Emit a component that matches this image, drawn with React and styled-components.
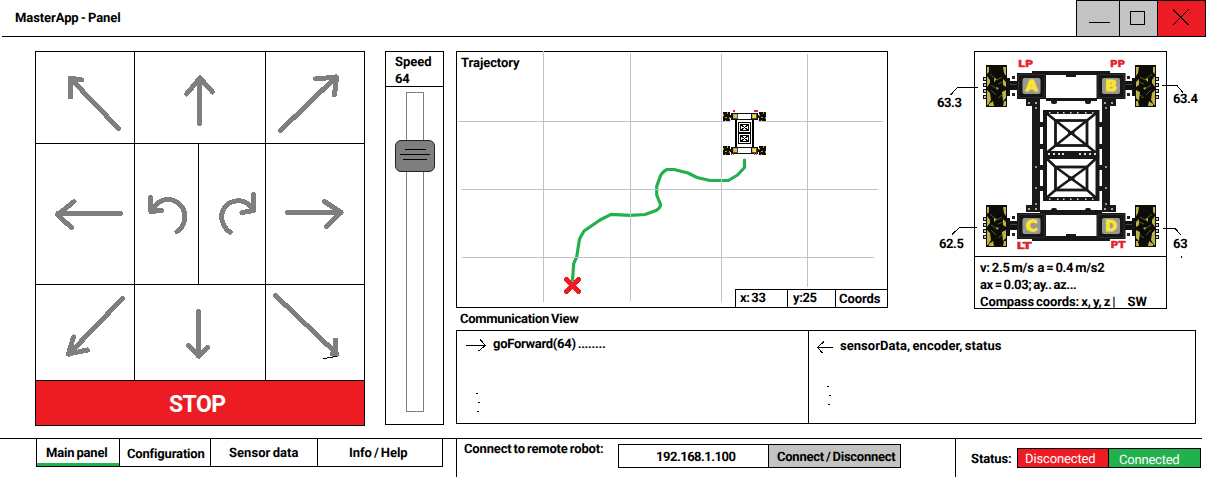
import React, { useLayoutEffect, useRef, useState } from "react";
import styled, { createGlobalStyle } from "styled-components";

const GlobalStyle = createGlobalStyle`
  * { box-sizing: border-box; }
  body {
    margin: 0;
    background: #fff;
    color: #000;
    font: 700 13px/16px Roboto, "Liberation Sans", sans-serif;
    text-rendering: geometricPrecision;
    overflow: hidden;
  }
`;

/* ---------- text ---------- */

const Label = styled.span`
  display: block;
  flex: none;
  width: max-content;
  white-space: pre;
  word-spacing: ${(p) => p.$word ?? -1}px;
  font-weight: ${(p) => (p.$light ? 400 : 700)};
  font-size: ${(p) => p.$size || 13}px;
  color: ${(p) => p.$color || "#000"};
`;

// Tracks its letters out or in so that the label takes the given width.
function Text({ w, children, ...rest }) {
  const ref = useRef(null);
  const [spacing, setSpacing] = useState(0);
  useLayoutEffect(() => {
    ref.current.style.letterSpacing = "0px";
    const natural = ref.current.getBoundingClientRect().width;
    const next = (w + 0.5 - natural) / children.length;
    ref.current.style.letterSpacing = `${next}px`;
    setSpacing(next);
  }, [w, children]);
  return (
    <Label ref={ref} style={{ letterSpacing: spacing }} {...rest}>
      {children}
    </Label>
  );
}

/* ---------- window frame ---------- */

const Window = styled.div`
  width: 1206px;
  height: 477px;
  display: flex;
  flex-direction: column;
  background: #fff;
`;

const TitleBar = styled.header`
  height: 37px;
  margin-left: 2px;
  padding-left: 13px;
  display: flex;
  justify-content: space-between;
  border-bottom: 1px solid #000;
`;

const TitleText = styled.div`
  padding-top: 11px;
`;

const WindowButtons = styled.div`
  display: grid;
  grid-template-columns: 42px 37px 47px;
  gap: 1px;
  padding: 1px 1px 0;
  background: #000;
`;

const WindowButton = styled.button`
  border: 0;
  padding: 0;
  background: ${(p) => (p.$danger ? "#ed1c24" : "#c3c3c3")};
`;

const Drawing = styled.svg`
  display: block;
  width: 100%;
  height: 100%;
  fill: none;
  stroke: #000;
  stroke-width: 1;
`;

const Main = styled.main`
  display: flex;
  align-items: flex-start;
  height: 401px;
  padding: 14px 0 0 35px;
`;

/* ---------- drive pad ---------- */

const Pad = styled.section`
  display: grid;
  flex: none;
  grid-template-columns: 98px 130px 98px;
  grid-template-rows: 91px 140px 95px 44px;
  gap: 1px;
  padding: 1px;
  background: #000;
`;

const PadButton = styled.button`
  border: 0;
  padding: 0;
  background: #fff;
`;

const TurnPair = styled.div`
  display: grid;
  grid-template-columns: 63px 66px;
  gap: 1px;
`;

const StopButton = styled.button`
  grid-column: 1 / -1;
  display: flex;
  align-items: center;
  border: 0;
  padding: 3px 0 0 133px;
  background: #ed1c24;
  font: inherit;
`;

const ArrowDrawing = styled(Drawing)`
  stroke: #7f7f7f;
  stroke-width: 5;
  stroke-linecap: round;
  stroke-linejoin: round;
`;

function Arrow({ box, d, children }) {
  return (
    <PadButton>
      <ArrowDrawing viewBox={box} shapeRendering="crispEdges">
        <path d={d} />
        {children}
      </ArrowDrawing>
    </PadButton>
  );
}

/* ---------- speed ---------- */

const SpeedPanel = styled.section`
  flex: none;
  width: 59px;
  height: 374px;
  margin-left: 20px;
  border: 1px solid #000;
`;

const SpeedHead = styled.div`
  height: 35px;
  padding: 2px 0 0 9px;
  border-bottom: 1px solid #000;
  line-height: 17px;
`;

const Track = styled.div`
  width: 18px;
  height: 320px;
  margin: 5px 0 0 20px;
  padding-top: 47px;
  border: 1px solid #7f7f7f;
`;

const Thumb = styled.div`
  display: flex;
  flex-direction: column;
  align-items: center;
  gap: 4px;
  width: 40px;
  height: 32px;
  margin-left: -12px;
  padding-top: 8px;
  border: 1px solid #222;
  border-radius: 6px;
  background: #7f7f7f;
`;

const Grip = styled.i`
  width: ${(p) => p.$w}px;
  height: 1px;
  background: #000;
`;

/* ---------- right side ---------- */

const Views = styled.div`
  margin-left: 12px;
  width: 750px;
`;

const TopViews = styled.div`
  display: flex;
  height: 258px;
`;

const Trajectory = styled.section`
  position: relative;
  flex: none;
  width: 432px;
  height: 257px;
  border: 1px solid #000;
`;

const TrajectoryHead = styled.div`
  padding: 4px 0 0 4px;
`;

const MapLayer = styled(Drawing)`
  position: absolute;
  inset: -1px;
  width: 432px;
  height: 257px;
`;

const CoordBar = styled.div`
  position: absolute;
  right: -1px;
  bottom: -1px;
  display: grid;
  grid-template-columns: 51px 47px 51px;
  gap: 1px;
  padding: 1px;
  height: 19px;
  background: #000;
`;

const CoordCell = styled.div`
  padding: ${(p) => p.$top || 1}px 0 0 ${(p) => p.$left}px;
  line-height: 16px;
  height: 17px;
  background: #fff;
`;

const RobotArea = styled.section`
  position: relative;
  display: flex;
  margin-left: 46px;
`;

const Readings = styled.div`
  width: ${(p) => p.$w}px;
  padding: ${(p) => p.$top}px 0 0 ${(p) => p.$left}px;
  display: flex;
  flex-direction: column;
  gap: ${(p) => p.$gap}px;
`;

const Indented = styled.div`
  padding-left: 2px;
`;

const RobotPanel = styled.div`
  width: 193px;
  height: 258px;
  border: 1px solid #000;
  overflow: hidden;
`;

const RobotPicture = styled.div`
  height: 205px;
  border-bottom: 1px solid #000;
`;

const Telemetry = styled.div`
  padding: 3px 0 0 5px;
  line-height: 17px;
`;

const TelemetryRow = styled.div`
  display: flex;
  gap: 12px;
`;

const LeaderLines = styled(Drawing)`
  position: absolute;
  left: 0;
  top: 0;
  width: 272px;
  height: 258px;
`;

const CommTitle = styled.div`
  height: 21px;
  padding: 3px 0 0 4px;
`;

const CommBox = styled.section`
  display: grid;
  grid-template-columns: 351px 386px;
  grid-template-rows: 92px;
  gap: 1px;
  width: 740px;
  height: 94px;
  padding: 1px;
  background: #000;
`;

const CommPane = styled.div`
  display: grid;
  grid-template-columns: ${(p) => p.$first}px 1fr;
  align-items: start;
  padding-top: ${(p) => p.$top}px;
  background: #fff;
`;

const CommGlyphs = styled(Drawing)`
  height: 80px;
`;

/* ---------- footer ---------- */

const Footer = styled.footer`
  display: flex;
  flex: none;
  width: 1202px;
  height: 39px;
  border-top: 1px solid #000;
`;

const Tabs = styled.nav`
  display: grid;
  grid-template-columns: 82px 90px 106px 124px;
  gap: 1px;
  width: 407px;
  height: 28px;
  margin-left: 36px;
  padding: 0 1px 1px;
  background: #000;
`;

const Tab = styled.div`
  padding: ${(p) => p.$top || 7}px 0 0 ${(p) => p.$left}px;
  background: #fff;
  box-shadow: ${(p) => (p.$active ? "inset 0 -3px #22b14c" : "none")};
`;

const Connection = styled.div`
  display: flex;
  align-items: flex-start;
  width: 499px;
  margin-left: 13px;
  padding: 2px 0 0 7px;
  border-left: 1px solid #000;
`;

const AddressGroup = styled.div`
  display: grid;
  grid-template-columns: 149px 131px;
  gap: 1px;
  width: 283px;
  height: 24px;
  margin: 3px 0 0 14px;
  padding: 1px;
  background: #000;
`;

const AddressCell = styled.div`
  padding: 5px 0 0 ${(p) => p.$left}px;
  background: ${(p) => (p.$button ? "#c3c3c3" : "#fff")};
`;

const ConnectionLabel = styled.div`
  width: 140px;
  padding-top: 1px;
`;

const Status = styled.div`
  display: flex;
  align-items: flex-start;
  padding: 9px 0 0 15px;
  border-left: 1px solid #000;
`;

const StatusLabel = styled.div`
  width: 46px;
  padding-top: 4px;
`;

const StatusBar = styled.div`
  display: grid;
  grid-template-columns: 90px 91px;
  gap: 1px;
  height: 20px;
  padding: 1px;
  background: #000;
`;

const StatusCell = styled.div`
  height: 18px;
  padding: ${(p) => p.$top}px 0 0 ${(p) => p.$left}px;
  background: ${(p) => (p.$on ? "#22b14c" : "#ed1c24")};
`;

/* ---------- robot drawing ---------- */

const Letter = styled.text`
  font: 700 ${(p) => p.$size}px "DejaVu Sans", sans-serif;
  fill: ${(p) => p.$fill};
  stroke: ${(p) => p.$fill};
  stroke-width: ${(p) => p.$edge || 0};
`;

function Wheel({ x, y, flip }) {
  return (
    <g transform={`translate(${x} ${y})${flip ? " translate(21 0) scale(-1 1)" : ""}`} stroke="none">
      {[13, 19, 25, 31].map((b) => (
        <g key={b}>
          <rect x="-3" y={b - 1} width="4" height="4" fill="#111" />
          <rect x="-2" y={b} width="2" height="2" fill="#c3c3c3" />
        </g>
      ))}
      <rect x="20" y="13" width="4" height="18" fill="#111" />
      <rect x="23" y="16" width="9" height="9" fill="#111" />
      <rect x="24" y="19" width="7" height="1" fill="#444" />
      <rect x="26" y="11" width="3" height="3" fill="#222" />
      <rect x="26" y="28" width="3" height="3" fill="#222" />
      <rect width="21" height="42" fill="#0c0c08" />
      <path
        d="M1 2h2v5l-2 2zM1 11l3 4v3l-3 4zM1 25l3 3 1 7-3 5h-1zM17 2h3v9l-2-3zM17 14l3 3v5l-3-2zM16 27l4-2v8l-3 3zM18 36h2v5h-3zM8 13l3 1-3 3zM10 22l3 1-2 2zM3 39l4-3 1 5h-5z"
        fill="#bdb445"
      />
      <path d="M4 9l7 6M11 15l5-3M5 20l6 4M5 25l5 5M12 19l5-2M12 33l4-3" stroke="#6f6b2c" strokeWidth=".8" />
    </g>
  );
}

function Motor({ x, y, h, letter }) {
  return (
    <g>
      <rect x={x} y={y} width="29" height={h} fill="#161616" stroke="none" />
      <rect x={x + 1.5} y={y + 1.5} width="26" height={h - 3} stroke="#2c2c2c" />
      <rect x={x + 5.5} y={y + 5} width="18" height="16" rx="2" fill="#999992" stroke="none" />
      <Letter
        x={x + 14.5}
        y={y + 18.2}
        textAnchor="middle"
        textLength="12"
        lengthAdjust="spacingAndGlyphs"
        $size={15}
        $fill="#f9e532"
        $edge={1}
      >
        {letter}
      </Letter>
    </g>
  );
}

function Bracket({ x, y }) {
  return (
    <g stroke="none">
      <rect x={x} y={y} width="14" height="7" fill="#1a1a1a" />
      <rect x={x + 2} y={y + 3} width="2" height="2" fill="#aaa" />
      <rect x={x + 9} y={y + 3} width="2" height="2" fill="#aaa" />
    </g>
  );
}

function Truss({ y, h, top, bottom }) {
  return (
    <g stroke="#181818">
      <rect x="1045" y={y} width="52.5" height={h} strokeWidth="4" />
      <rect x="1055.5" y={top} width="31.5" height={bottom - top} strokeWidth="2.8" />
      <path
        d={`M1055.500 ${top}L1087 ${bottom}M1087 ${top}L1055.500 ${bottom}M1045 ${y}L1055.500 ${top}M1097.500 ${y}L1087 ${top}M1045 ${y + h}L1055.500 ${bottom}M1097.500 ${y + h}L1087 ${bottom}`}
        strokeWidth="2.6"
      />
      <rect x="1068" y={(top + bottom) / 2 - 2} width="6.5" height="4" fill="#181818" stroke="none" />
    </g>
  );
}

function Robot() {
  return (
    <Drawing viewBox="975 52 191 204">
      <Wheel x={986} y={65} />
      <Wheel x={1135} y={65} flip />
      <Wheel x={986} y={205} />
      <Wheel x={1135} y={205} flip />

      <g fill="#181818" stroke="none">
        <rect x="1032" y="100" width="8" height="109" />
        <rect x="1102" y="100" width="8" height="109" />
        <rect x="1032" y="71" width="78" height="4" />
        <rect x="1046" y="98" width="51" height="3" />
        <rect x="1051" y="99" width="6" height="5" rx="2" />
        <rect x="1085" y="99" width="6" height="5" rx="2" />
        <rect x="1066" y="74" width="10" height="3" />
        <rect x="1040" y="210" width="62" height="5" />
        <rect x="1051" y="208" width="6" height="4" rx="2" />
        <rect x="1085" y="208" width="6" height="4" rx="2" />
        <rect x="1032" y="236" width="78" height="5" />
        <rect x="1066" y="234" width="10" height="4" />
        {[122, 144, 165, 186].map((y) => (
          <g key={y}>
            <rect x="1039" y={y} width="6" height="5" />
            <rect x="1098" y={y} width="6" height="5" />
          </g>
        ))}
      </g>

      <Truss y={112} h={42} top={120.5} bottom={145.5} />
      <Truss y={157} h={42} top={167} bottom={190} />
      <g stroke="none">
        <rect x="1044" y="151" width="55" height="8" fill="#181818" />
        <g fill="#ddd">
          {[1048, 1053, 1058, 1062, 1079, 1084, 1089, 1094].map((x) => (
            <rect key={x} x={x} y="153" width="2" height="2" />
          ))}
          {[1049, 1057, 1063, 1070, 1077, 1085, 1092].map((x) => (
            <g key={x}>
              <rect x={x} y="112" width="1.5" height="1.5" />
              <rect x={x} y="198.5" width="1.5" height="1.5" />
            </g>
          ))}
        </g>
        <g fill="#999">
          {[107, 166, 187, 203].map((y) => (
            <g key={y}>
              <rect x="1035" y={y} width="2" height="2" />
              <rect x="1105" y={y} width="2" height="2" />
            </g>
          ))}
        </g>
      </g>

      <Bracket x={1026} y={99} />
      <Bracket x={1102} y={99} />
      <Bracket x={1026} y={205} />
      <Bracket x={1102} y={205} />
      <Motor x={1017} y={73} h={26} letter="A" />
      <Motor x={1096.5} y={73} h={26} letter="B" />
      <Motor x={1017} y={213} h={26} letter="C" />
      <Motor x={1096.5} y={213} h={26} letter="D" />

      {[
        ["LP", 1018, 67.3],
        ["PP", 1110, 67.3],
        ["LT", 1016.5, 248.8],
        ["PT", 1110.5, 248.3],
      ].map(([t, x, y]) => (
        <Letter key={t} x={x} y={y} textLength="15" lengthAdjust="spacingAndGlyphs" $size={9.5} $fill="#e3242b" $edge={0.5}>
          {t}
        </Letter>
      ))}
    </Drawing>
  );
}

function MiniWheel({ x, y }) {
  return (
    <g stroke="none">
      <rect x={x} y={y} width="7" height="9" fill="#0c0c08" />
      <path d={`M${x} ${y + 2}h1v2h-1zM${x + 6} ${y + 5}h1v2h-1zM${x + 2} ${y + 5}h2v1h-2zM${x + 4} ${y}h1v2h-1zM${x + 2} ${y + 8}h1v1h-1z`} fill="#a89f3a" />
    </g>
  );
}

function MiniRobot() {
  return (
    <g shapeRendering="crispEdges">
      <rect x="731" y="113" width="27" height="40" fill="#fff" stroke="none" />
      {[112, 146].map((y) => (
        <g key={y}>
          <MiniWheel x={723} y={y} />
          <MiniWheel x={759} y={y} />
          <rect x="730" y={y + 3} width="29" height="3" fill="#111" stroke="none" />
          <rect x="731" y={y + 1} width="27" height="7" fill="#111" stroke="none" />
          <rect x="738" y={y + 2} width="13" height="5" fill="#fff" stroke="none" />
          <rect x="733" y={y + 2} width="4" height="4" fill="#d9c93a" stroke="#888" strokeWidth=".5" />
          <rect x="752" y={y + 2} width="4" height="4" fill="#f9e532" stroke="#888" strokeWidth=".5" />
        </g>
      ))}
      <path d="M736 120v27M753 120v27" strokeWidth="2" />
      <g>
        <rect x="738.5" y="122.5" width="12" height="10" />
        <rect x="740.5" y="124.5" width="8" height="6" />
        <rect x="738.5" y="133.5" width="12" height="10" />
        <rect x="740.5" y="135.5" width="8" height="6" />
        <path d="M741 125l7 5M748 125l-7 5M741 136l7 5M748 136l-7 5" />
      </g>
      <path d="M733 110h2v2h-2zM754 110h4v2h-4zM731 153h1v2h-1zM733 153h1v2h-1zM754 153h1v2h-1zM756 153h1v2h-1z" fill="#e3242b" stroke="none" />
    </g>
  );
}

function TrajectoryMap() {
  return (
    <MapLayer viewBox="456 51 432 257">
      <path
        d="M744.5 160V167.500L737.500 175L728.500 180.500H710L697 177.500L688 173L674 169.500H667Q662 172 660 177L656.700 186.500V195L660.500 204.500Q660.500 208 656 210.500L645 214.500L630 215.300L611 214.300L600 220L584 231L579.500 239L576.700 257L573.700 263.500L572.500 280"
        stroke="#22b14c"
        strokeWidth="3.2"
        strokeLinecap="round"
        strokeLinejoin="round"
      />
      <path
        d="M543.500 51V302M630.500 53V301M721.500 54V302M807.500 54V287M458 121.500H883M461 189.500H878M462 257.500H874"
        stroke="#c3c3c3"
        shapeRendering="crispEdges"
      />
      <path d="M566.500 279.500L578.500 291.500M578.500 279.500L566.500 291.500" stroke="#ed1c24" strokeWidth="4.800" strokeLinecap="round" shapeRendering="crispEdges" />
      <MiniRobot />
    </MapLayer>
  );
}

/* ---------- page ---------- */

export default function App() {
  return (
    <Window>
      <GlobalStyle />
      <TitleBar>
        <TitleText>
          <Text w={105}>MasterApp - Panel</Text>
        </TitleText>
        <WindowButtons>
          <WindowButton>
            <Drawing viewBox="1077 1 42 35" shapeRendering="crispEdges">
              <path d="M1089 22.500H1110" />
            </Drawing>
          </WindowButton>
          <WindowButton>
            <Drawing viewBox="1120 1 37 35" shapeRendering="crispEdges">
              <rect x="1130.500" y="11.500" width="14" height="13" />
            </Drawing>
          </WindowButton>
          <WindowButton $danger>
            <Drawing viewBox="1158 1 47 35" shapeRendering="crispEdges">
              <path d="M1173 9.500L1188.500 25M1188.500 9.500L1173 25" />
            </Drawing>
          </WindowButton>
        </WindowButtons>
      </TitleBar>

      <Main>
        <Pad>
          <Arrow box="36 52 98 91" d="M118.500 128.500L70.500 78.500M70.500 97V78L82 80" />
          <Arrow box="135 52 130 91" d="M199.500 123.500V78.500M186.500 94L200 78L212.500 92" />
          <Arrow box="266 52 98 91" d="M280.500 130.500L336 77M315.500 79L336.500 77L334.500 95" />
          <Arrow box="36 144 98 140" d="M120.500 213.500H58M74 201.500L57.500 215L71.500 227.500" />
          <TurnPair>
            <Arrow box="135 144 63 140" d="M150.500 197.500L151 211.500L161.500 210.500M153 208C159 200 167 197.500 175 201C183 205 186.500 213 184 222Q182 229 177 231.500" />
            <Arrow box="199 144 66 140" d="M253.500 194.500L254 210.500L242 212.500M251 207C245 199.500 236 199.500 229.500 203C222 208 220 216 223 223Q225 229 230 232" />
          </TurnPair>
          <Arrow box="266 144 98 140" d="M287.500 212.500H341M324.500 201.500L341 212.500L326.500 226.500" />
          <Arrow box="36 285 98 95" d="M122.500 298.500L69 354M73.500 337L68.500 354L87.500 350" />
          <Arrow box="135 285 130 95" d="M198.500 311.500V356M188.500 345.500L199 356L207.500 347.500" />
          <Arrow box="266 285 98 95" d="M275.500 295.500L337 354M335.500 340V354H332">
            <path d="M323 358.500H327M327 357.500H333M333 356.500H337" stroke="#000" strokeWidth="1" strokeLinecap="butt" />
          </Arrow>
          <StopButton>
            <Text w={56} $size={23} $color="#fff">STOP</Text>
          </StopButton>
        </Pad>

        <SpeedPanel>
          <SpeedHead>
            <Text w={36}>Speed</Text>
            <Text w={14}>64</Text>
          </SpeedHead>
          <Track>
            <Thumb>
              <Grip $w={21} />
              <Grip $w={30} />
              <Grip $w={24} />
            </Thumb>
          </Track>
        </SpeedPanel>

        <Views>
          <TopViews>
            <Trajectory>
              <TrajectoryHead>
                <Text w={58}>Trajectory</Text>
              </TrajectoryHead>
              <TrajectoryMap />
              <CoordBar>
                <CoordCell $left={4}><Text w={25}>x: 33</Text></CoordCell>
                <CoordCell $left={5}><Text w={23}>y:25</Text></CoordCell>
                <CoordCell $left={3} $top={2}><Text w={41}>Coords</Text></CoordCell>
              </CoordBar>
            </Trajectory>

            <RobotArea>
              <Readings $w={40} $top={45} $left={3} $gap={125}>
                <Text w={24}>63.3</Text>
                <Indented><Text w={24}>62.5</Text></Indented>
              </Readings>
              <RobotPanel>
                <RobotPicture>
                  <Robot />
                </RobotPicture>
                <Telemetry>
                  <Text w={124}>v: 2.5 m/s  a = 0.4 m/s2</Text>
                  <Text w={96}>ax = 0.03; ay.. az...</Text>
                  <TelemetryRow>
                    <Text w={135}>Compass coords: x, y, z |</Text>
                    <Text w={19}>SW</Text>
                  </TelemetryRow>
                </Telemetry>
              </RobotPanel>
              <Readings $w={38} $top={41} $left={6} $gap={129}>
                <Text w={24}>63.4</Text>
                <Text w={14}>63</Text>
              </Readings>
              <LeaderLines viewBox="934 51 272 258" shapeRendering="crispEdges">
                <path d="M978 87.500H957.500L950.500 95M1162 85.500H1177L1183 92.500M977 227.500H959.500L952 234.500M1163 228.500H1175L1181 235M1181.500 256V258" />
              </LeaderLines>
            </RobotArea>
          </TopViews>

          <CommTitle>
            <Text w={118}>Communication View</Text>
          </CommTitle>
          <CommBox>
            <CommPane $first={36} $top={6}>
              <CommGlyphs viewBox="457 337 36 80" shapeRendering="crispEdges">
                <path d="M466 345.500H485M480 339.500L485.500 345.500L478.500 351M475.500 393.500h2M477.500 402.500h2M476.500 411.500h2" />
              </CommGlyphs>
              <Text w={112}>goForward(64) ........</Text>
            </CommPane>
            <CommPane $first={31} $top={8}>
              <CommGlyphs viewBox="809 339 31 80" shapeRendering="crispEdges">
                <path d="M817 347.500H833M824 341.500L817.500 347.500L822.500 353M826.500 386.500h2M828.500 395.500h2M827.500 404.500h2" />
              </CommGlyphs>
              <Text w={161}>sensorData, encoder, status</Text>
            </CommPane>
          </CommBox>
        </Views>
      </Main>

      <Footer>
        <Tabs>
          <Tab $active $left={9}><Text w={61}>Main panel</Text></Tab>
          <Tab $left={7} $top={8}><Text w={77}>Configuration</Text></Tab>
          <Tab $left={18}><Text w={69}>Sensor data</Text></Tab>
          <Tab $left={31}><Text w={58}>Info / Help</Text></Tab>
        </Tabs>
        <Connection>
          <ConnectionLabel>
            <Text w={139}>Connect to remote robot:</Text>
          </ConnectionLabel>
          <AddressGroup>
            <AddressCell $left={37}><Text w={79}>192.168.1.100</Text></AddressCell>
            <AddressCell $button $left={8}><Text w={118}>Connect / Disconnect</Text></AddressCell>
          </AddressGroup>
        </Connection>
        <Status>
          <StatusLabel>
            <Text w={40}>Status:</Text>
          </StatusLabel>
          <StatusBar>
            <StatusCell $left={7} $top={3}><Text w={70} $light $color="#fff">Disconected</Text></StatusCell>
            <StatusCell $on $left={10} $top={4}><Text w={60} $light $color="#fff">Connected</Text></StatusCell>
          </StatusBar>
        </Status>
      </Footer>
    </Window>
  );
}
